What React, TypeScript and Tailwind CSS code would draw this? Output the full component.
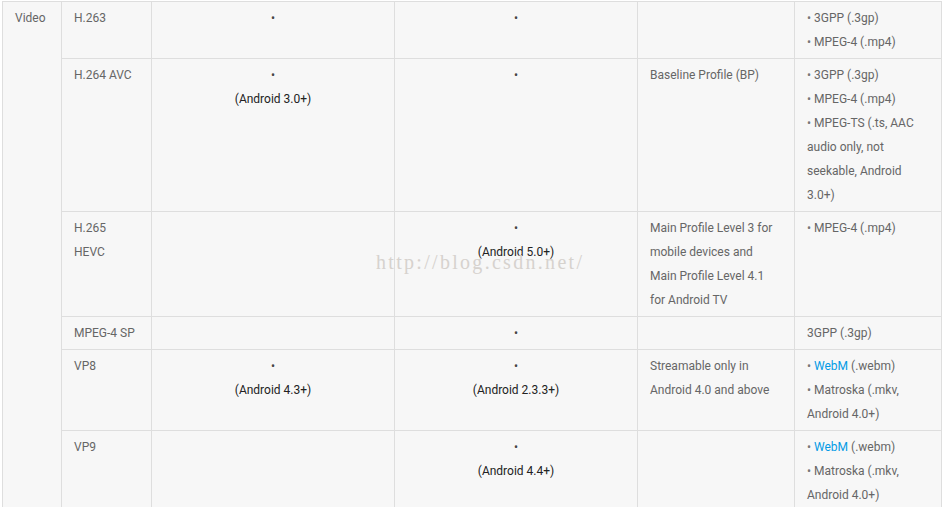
import React from 'react';

type Row = {
  codec: React.ReactNode;
  encoder?: string | null;
  decoder?: string | null;
  details?: React.ReactNode;
  containers: React.ReactNode;
};

const Dot = () => <span className="text-[#444]">•</span>;

const Support: React.FC<{ note: string | null | undefined }> = ({ note }) => {
  if (note === undefined) return null;
  return (
    <div className="text-center">
      <Dot />
      {note && <div className="text-[#222]">{note}</div>}
    </div>
  );
};

const Item: React.FC<{ children: React.ReactNode }> = ({ children }) => (
  <div>
    <span className="text-[#777]">• </span>
    {children}
  </div>
);

const WebM = () => (
  <>
    <span className="text-[#039be5]">WebM</span> (.webm)
  </>
);

const rows: Row[] = [
  {
    codec: 'H.263',
    encoder: null,
    decoder: null,
    containers: (
      <>
        <Item>3GPP (.3gp)</Item>
        <Item>MPEG-4 (.mp4)</Item>
      </>
    ),
  },
  {
    codec: 'H.264 AVC',
    encoder: '(Android 3.0+)',
    decoder: null,
    details: 'Baseline Profile (BP)',
    containers: (
      <>
        <Item>3GPP (.3gp)</Item>
        <Item>MPEG-4 (.mp4)</Item>
        <Item>MPEG-TS (.ts, AAC audio only, not seekable, Android 3.0+)</Item>
      </>
    ),
  },
  {
    codec: (
      <>
        H.265
        <br />
        HEVC
      </>
    ),
    decoder: '(Android 5.0+)',
    details: 'Main Profile Level 3 for mobile devices and Main Profile Level 4.1 for Android TV',
    containers: <Item>MPEG-4 (.mp4)</Item>,
  },
  {
    codec: 'MPEG-4 SP',
    decoder: null,
    containers: '3GPP (.3gp)',
  },
  {
    codec: 'VP8',
    encoder: '(Android 4.3+)',
    decoder: '(Android 2.3.3+)',
    details: 'Streamable only in Android 4.0 and above',
    containers: (
      <>
        <Item>
          <WebM />
        </Item>
        <Item>Matroska (.mkv, Android 4.0+)</Item>
      </>
    ),
  },
  {
    codec: 'VP9',
    decoder: '(Android 4.4+)',
    containers: (
      <>
        <Item>
          <WebM />
        </Item>
        <Item>Matroska (.mkv, Android 4.0+)</Item>
      </>
    ),
  },
];

const cell = 'border border-[#dedede] px-3 pt-1 pb-1 align-top';

export default function App() {
  return (
    <div className="relative h-[507px] bg-white font-['Roboto',sans-serif] text-[12px] leading-6 text-[#666] overflow-hidden">
      <table className="ml-[2px] mt-px w-[939px] table-fixed border-collapse bg-[#f7f7f7]">
        <colgroup>
          <col className="w-[59px]" />
          <col className="w-[90px]" />
          <col className="w-[243px]" />
          <col className="w-[243px]" />
          <col className="w-[157px]" />
          <col className="w-[147px]" />
        </colgroup>
        <tbody>
          {rows.map((r, i) => (
            <tr key={i}>
              {i === 0 && (
                <td rowSpan={rows.length} className={cell}>
                  Video
                </td>
              )}
              <td className={cell}>{r.codec}</td>
              <td className={cell}>
                <Support note={r.encoder} />
              </td>
              <td className={cell}>
                <Support note={r.decoder} />
              </td>
              <td className={`${cell} pr-4`}>{r.details}</td>
              <td className={cell}>{r.containers}</td>
            </tr>
          ))}
        </tbody>
      </table>

      {/* csdn watermark */}
      <div className="pointer-events-none absolute left-[376px] top-[250px] font-['Liberation_Serif',serif] text-[20px] tracking-[2.3px] text-[#d6d2ce] select-none">
        http://blog.csdn.net/
      </div>
    </div>
  );
}
